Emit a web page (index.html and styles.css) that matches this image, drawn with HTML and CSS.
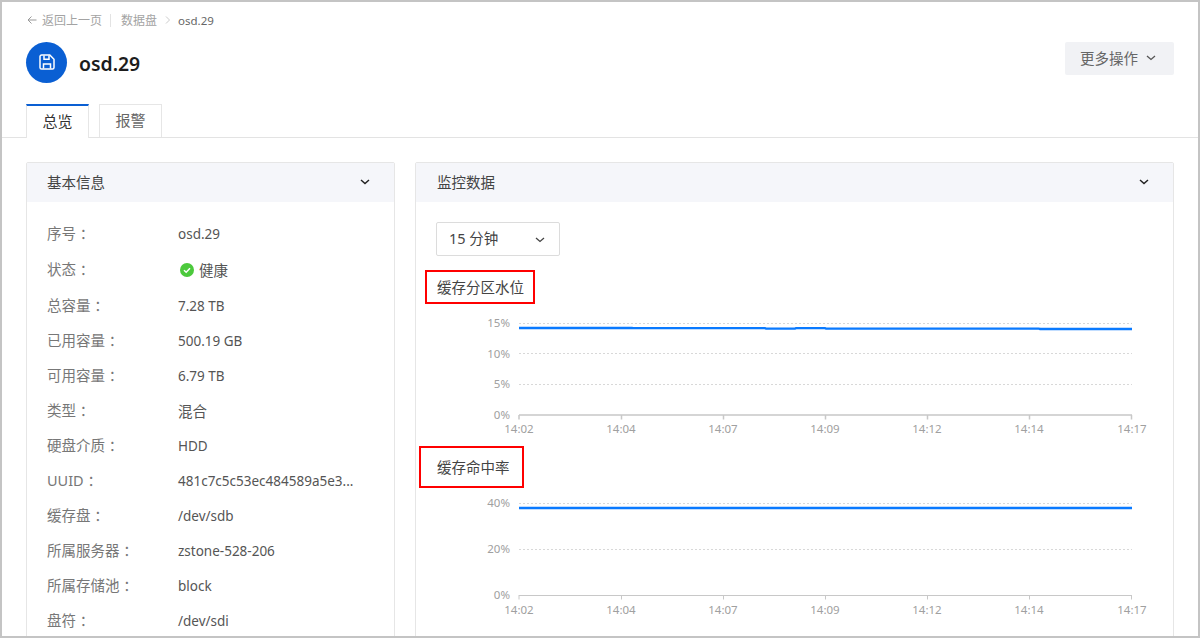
FILE: index.html
```html
<!DOCTYPE html>
<html lang="zh-CN">
<head>
    <meta charset="UTF-8">
    <title>osd.29</title>
    <link rel="stylesheet" href="styles.css">
</head>
<body>
    <div class="frame">
        <header class="page-head">
            <div class="crumbs">
                <svg class="crumb-back" width="10" height="10" viewBox="0 0 10 10"><path d="M4.500 1.500 1 5l3.500 3.500M1 5h8.500" fill="none" stroke="#999" stroke-width="1"/></svg>
                <span>返回上一页</span>
                <span class="crumb-line"></span>
                <span>数据盘</span>
                <svg class="crumb-next" width="6" height="10" viewBox="0 0 6 10"><path d="m1 1.500 3.500 3.500L1 8.500" fill="none" stroke="#ccc" stroke-width="1"/></svg>
                <span class="crumb-now">osd.29</span>
            </div>
            <div class="title-row">
                <div class="title-left">
                    <div class="disk-icon">
                        <svg width="16" height="16" viewBox="0 0 16 16"><path d="M2.600 1h8.200L15 5.200v8.200a1.600 1.600 0 0 1-1.600 1.600H2.600A1.600 1.600 0 0 1 1 13.400V2.600A1.600 1.600 0 0 1 2.600 1Z" fill="none" stroke="#fff" stroke-width="1.500"/><path d="M5 1.500v3.700h5V1.500M4.500 14.500V10h7v4.500" fill="none" stroke="#fff" stroke-width="1.500"/></svg>
                    </div>
                    <h1 class="title">osd.29</h1>
                </div>
                <button class="more-btn">更多操作
                    <svg width="10" height="6" viewBox="0 0 10 6"><path d="m1 1 4 3.500L9 1" fill="none" stroke="#555" stroke-width="1.300"/></svg>
                </button>
            </div>
            <div class="tabs">
                <div class="tab tab-on">总览</div>
                <div class="tab">报警</div>
            </div>
        </header>

        <div class="content">
            <section class="panel panel-info">
                <div class="panel-head">基本信息
                    <svg width="10" height="6" viewBox="0 0 10 6"><path d="m1 1 4 3.500L9 1" fill="none" stroke="#222" stroke-width="1.500"/></svg>
                </div>
                <div class="info-list">
                    <div class="info-row"><span class="info-key">序号 ：</span><span class="info-val">osd.29</span></div>
                    <div class="info-row info-status"><span class="info-key">状态 ：</span><span class="info-val status-val">
                        <svg width="14" height="14" viewBox="0 0 14 14"><circle cx="7" cy="7" r="7" fill="#4cc93c"/><path d="m4 7.200 2.200 2.100L10 5.300" fill="none" stroke="#fff" stroke-width="1.500"/></svg>健康</span></div>
                    <div class="info-row"><span class="info-key">总容量 ：</span><span class="info-val">7.28 TB</span></div>
                    <div class="info-row"><span class="info-key">已用容量 ：</span><span class="info-val">500.19 GB</span></div>
                    <div class="info-row"><span class="info-key">可用容量 ：</span><span class="info-val">6.79 TB</span></div>
                    <div class="info-row"><span class="info-key">类型 ：</span><span class="info-val info-cjk">混合</span></div>
                    <div class="info-row"><span class="info-key">硬盘介质 ：</span><span class="info-val">HDD</span></div>
                    <div class="info-row"><span class="info-key">UUID ：</span><span class="info-val">481c7c5c53ec484589a5e3...</span></div>
                    <div class="info-row"><span class="info-key">缓存盘 ：</span><span class="info-val">/dev/sdb</span></div>
                    <div class="info-row"><span class="info-key">所属服务器 ：</span><span class="info-val">zstone-528-206</span></div>
                    <div class="info-row"><span class="info-key">所属存储池 ：</span><span class="info-val">block</span></div>
                    <div class="info-row"><span class="info-key">盘符 ：</span><span class="info-val">/dev/sdi</span></div>
                </div>
            </section>

            <section class="panel panel-chart">
                <div class="panel-head">监控数据
                    <svg width="10" height="6" viewBox="0 0 10 6"><path d="m1 1 4 3.500L9 1" fill="none" stroke="#222" stroke-width="1.500"/></svg>
                </div>
                <div class="chart-body">
                    <div class="range-select"><span class="range-text">15 分钟</span>
                        <svg class="range-arrow" width="10" height="6" viewBox="0 0 10 6"><path d="m1 1 4 3.500L9 1" fill="none" stroke="#444" stroke-width="1.300"/></svg>
                    </div>

                    <div class="chart-block">
                        <div class="chart-title">缓存分区水位<span class="mark mark-level"></span></div>
                        <svg class="chart" width="720" height="130" viewBox="0 0 720 130">
                            <g class="grid">
                                <path d="M83 13.500H696M83 43.500H696M83 74.500H696"/>
                            </g>
                            <path class="axis" d="M83 105H696M83 105v4.500M185.500 105v4.500M287.500 105v4.500M389.500 105v4.500M491.500 105v4.500M593.500 105v4.500M695.500 105v4.500"/>
                            <path class="line" d="M83 18H196L197 18.200H329L330 18.600H359L360 18.200H389L390 18.600H603L604 19H696"/>
                            <g class="y-labels">
                                <text x="74" y="17">15%</text>
                                <text x="74" y="47.500">10%</text>
                                <text x="74" y="78">5%</text>
                                <text x="74" y="109">0%</text>
                            </g>
                            <g class="x-labels">
                                <text x="83" y="123">14:02</text>
                                <text x="185" y="123">14:04</text>
                                <text x="287" y="123">14:07</text>
                                <text x="389" y="123">14:09</text>
                                <text x="491" y="123">14:12</text>
                                <text x="593" y="123">14:14</text>
                                <text x="696" y="123">14:17</text>
                            </g>
                        </svg>
                    </div>

                    <div class="chart-block">
                        <div class="chart-title">缓存命中率<span class="mark mark-hit"></span></div>
                        <svg class="chart" width="720" height="130" viewBox="0 0 720 130">
                            <g class="grid">
                                <path d="M83 13.500H696M83 59.500H696"/>
                            </g>
                            <path class="axis axis-thin" d="M83 105.500H696M83 105v4.500M185.500 105v4.500M287.500 105v4.500M389.500 105v4.500M491.500 105v4.500M593.500 105v4.500M695.500 105v4.500"/>
                            <path class="line" d="M83 18H696"/>
                            <g class="y-labels">
                                <text x="74" y="17">40%</text>
                                <text x="74" y="63">20%</text>
                                <text x="74" y="109">0%</text>
                            </g>
                            <g class="x-labels">
                                <text x="83" y="124">14:02</text>
                                <text x="185" y="124">14:04</text>
                                <text x="287" y="124">14:07</text>
                                <text x="389" y="124">14:09</text>
                                <text x="491" y="124">14:12</text>
                                <text x="593" y="124">14:14</text>
                                <text x="696" y="124">14:17</text>
                            </g>
                        </svg>
                    </div>
                </div>
            </section>
        </div>
    </div>
</body>
</html>
```

FILE: styles.css
```css
* {
    box-sizing: border-box;
}

html, body {
    margin: 0;
    padding: 0;
}

body {
    font-family: "Noto Sans", "Noto Sans CJK SC", sans-serif;
    font-size: 14.5px;
    color: #555;
    background-color: white;
}

.frame {
    width: 1200px;
    height: 638px;
    border: 2px solid #c4c4c4;
    overflow: hidden;
}

.page-head {
    height: 136px;
    padding: 0 24px;
    border-bottom: 1px solid #e3e3e3;
}

.crumbs {
    display: flex;
    align-items: center;
    height: 36px;
    font-size: 12px;
    color: #a3a3a3;
}

.crumb-back {
    margin: 0 5px 0 1px;
}

.crumb-line {
    width: 1px;
    height: 13px;
    margin: 0 10px 0 8px;
    background-color: #e3e3e3;
}

.crumb-next {
    margin: 0 7px 0 8px;
}

.crumb-now {
    font-size: 11.5px;
    color: #666;
}

.title-row {
    display: flex;
    justify-content: space-between;
    align-items: flex-start;
    margin-top: 4px;
}

.title-left {
    display: flex;
    align-items: center;
    gap: 12px;
}

.disk-icon {
    display: flex;
    justify-content: center;
    align-items: center;
    width: 41px;
    height: 41px;
    padding-bottom: 2px;
    border-radius: 50%;
    background-color: #0a5fd3;
}

.title {
    margin: 2px 0 0;
    font-size: 19.4px;
    font-weight: 600;
    color: #1c1c1c;
}

.more-btn {
    display: flex;
    align-items: center;
    gap: 8px;
    width: 109px;
    height: 33px;
    padding: 0 0 2px 15px;
    border: none;
    border-radius: 2px;
    font-family: inherit;
    font-size: 14.5px;
    color: #666;
    background-color: #f1f2f5;
}

.tabs {
    display: flex;
    gap: 10px;
    margin-top: 21px;
}

.tab {
    display: flex;
    justify-content: center;
    align-items: center;
    width: 63px;
    height: 33px;
    padding-bottom: 3px;
    border: 1px solid #e6e6e6;
    border-bottom: none;
    font-size: 15px;
    color: #666;
}

.tab-on {
    height: 34px;
    border-top: 2px solid #0a5fd3;
    color: #333;
    background-color: white;
}

.content {
    display: flex;
    gap: 20px;
    padding: 24px 24px 0;
}

.panel {
    height: 600px;
    border: 1px solid #e6e6e6;
    border-radius: 2px;
}

.panel-info {
    width: 369px;
}

.panel-chart {
    width: 759px;
}

.panel-head {
    display: flex;
    justify-content: space-between;
    align-items: center;
    height: 39px;
    padding: 0 24px 2px 20px;
    color: #444;
    background-color: #f5f6fa;
}

.panel-chart .panel-head {
    padding-left: 21px;
}

.info-list {
    padding: 14px 20px 0;
}

.info-row {
    display: flex;
    align-items: center;
    height: 35px;
}

.info-status {
    height: 37px;
}

.info-key {
    width: 131px;
    padding-bottom: 2px;
    color: #777;
}

.info-val {
    font-size: 13.5px;
    color: #555;
}

.info-cjk {
    font-size: 14.5px;
}

.status-val {
    display: flex;
    align-items: center;
    gap: 5px;
    margin-left: 2px;
    font-size: 14.5px;
}

.chart-body {
    padding: 20px 20px 0;
}

.range-select {
    display: flex;
    justify-content: space-between;
    align-items: center;
    width: 124px;
    height: 34px;
    padding: 0 14px 0 12px;
    border: 1px solid #dcdcdc;
    border-radius: 2px;
    color: #444;
}

.range-text {
    padding-bottom: 3px;
}

.range-arrow {
    margin-top: 2px;
}

.chart-block {
    padding-top: 21px;
}

.chart-block + .chart-block {
    padding-top: 17px;
}

.chart-title {
    position: relative;
    height: 20px;
    padding-left: 1px;
    line-height: 20px;
    color: #444;
}

.mark {
    position: absolute;
    border: 2px solid #f00;
}

.mark-level {
    left: -11px;
    top: -7px;
    width: 110px;
    height: 34px;
}

.mark-hit {
    left: -17px;
    top: -11px;
    width: 105px;
    height: 42px;
}

.chart {
    display: block;
    margin-top: 13px;
}

.grid path {
    fill: none;
    stroke: #d8d8d8;
    stroke-dasharray: 2 2;
}

.axis {
    fill: none;
    stroke: #c8c8c8;
    stroke-width: 1.500;
}

.axis-thin {
    stroke-width: 1;
}

.line {
    fill: none;
    stroke: #0a7aff;
    stroke-width: 2.300;
}

.y-labels text,
.x-labels text {
    font-size: 11.5px;
    fill: #a0a0a0;
}

.y-labels text {
    text-anchor: end;
}

.x-labels text {
    text-anchor: middle;
}
```
